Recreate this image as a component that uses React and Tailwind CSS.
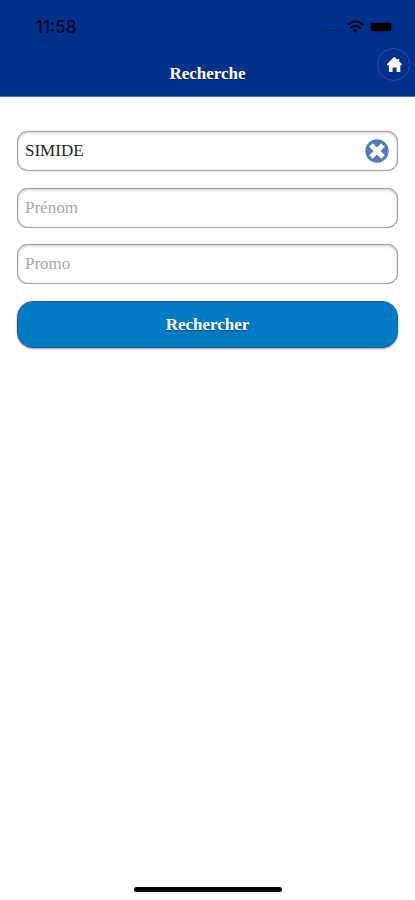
import React from "react";

function StatusBar() {
  return (
    <div className="h-12 flex items-start justify-between pl-[36px] pr-[24px] text-[#020a20]">
      <span className="mt-[15px] font-['Inter',sans-serif] text-[17px] leading-6 font-medium">
        11:58
      </span>
      <div className="mt-[19px] h-4 flex items-center">
        <div className="w-[18px] h-px mt-[7px] mr-[7px] bg-[#03246b]" />
        <svg width="17" height="13" viewBox="0 0 17 13" className="mr-[7px] -mt-[2px]">
          <g fill="none" stroke="currentColor" strokeWidth="2.2">
            <path d="M.9 4.8C5.1.4 11.9.4 16.1 4.8" />
            <path d="M3.6 8.1c2.7-2.8 7.1-2.8 9.8 0" />
          </g>
          <path d="m8.5 13-2.7-2.9c1.5-1.4 3.9-1.4 5.4 0z" fill="currentColor" />
        </svg>
        <div className="w-[20px] h-[8px] rounded-[1px] bg-black shadow-[0_0_2px_1px_#02226b]" />
      </div>
    </div>
  );
}

function Header() {
  return (
    <header className="h-[97px] bg-[#01318b] border-b border-[#5d62b5]">
      <StatusBar />
      <div className="grid grid-cols-[1fr_auto_1fr] items-start pr-[5px] pl-[5px]">
        <div />
        <h1 className="mt-[15px] text-[17px] leading-[22px] font-bold text-white [text-shadow:0_1px_1px_#001a50]">
          Recherche
        </h1>
        <button className="justify-self-end size-[33px] rounded-full border border-[#4a3cad] flex items-center justify-center">
          <svg width="16" height="17" viewBox="0 0 16 17" fill="white">
            <path d="M8.3.8 15.7 7.9v1.3h-1.4v6.9h-3.7v-4.6H6.6v4.6H2.9V9.2H1V7.9z" />
            <path d="M11.3 3h2v3.4h-2z" />
          </svg>
        </button>
      </div>
    </header>
  );
}

function Field({ value, placeholder, clearable }) {
  return (
    <div className="h-10 flex items-center rounded-[11px] border border-[#a3a3a3] bg-white pl-[7px] pr-[8px] shadow-[inset_0_1px_3px_#cccccc,0_0_1px_#999999]">
      <input
        className="min-w-0 flex-1 bg-transparent text-[17px] leading-6 text-[#242424] placeholder:text-[#a9a9a9] outline-none"
        defaultValue={value}
        placeholder={placeholder}
      />
      {clearable && (
        <button className="size-6">
          <svg width="24" height="24" viewBox="0 0 24 24">
            <circle cx="12" cy="12" r="11.7" fill="#557cba" />
            <path d="m6 6 12 12M18 6 6 18" stroke="white" strokeWidth="5" />
          </svg>
        </button>
      )}
    </div>
  );
}

export default function App() {
  return (
    <div className="h-[900px] w-full flex flex-col bg-white font-['Liberation_Serif',serif]">
      <Header />
      <main className="flex-1 flex flex-col gap-[16.6px] pt-[34px] pl-[17px] pr-[17px]">
        <Field value="SIMIDE" clearable />
        <Field placeholder="Prénom" />
        <Field placeholder="Promo" />
        <button className="h-[47px] rounded-[16px] border border-[#146192] bg-[#007ac5] text-[17px] font-bold text-white shadow-[0_1px_2px_#999999] [text-shadow:0_1px_1px_#004a7c]">
          Rechercher
        </button>
      </main>
      <div className="mb-[8px] h-[5px] w-[148px] self-center rounded-full bg-black" />
    </div>
  );
}
